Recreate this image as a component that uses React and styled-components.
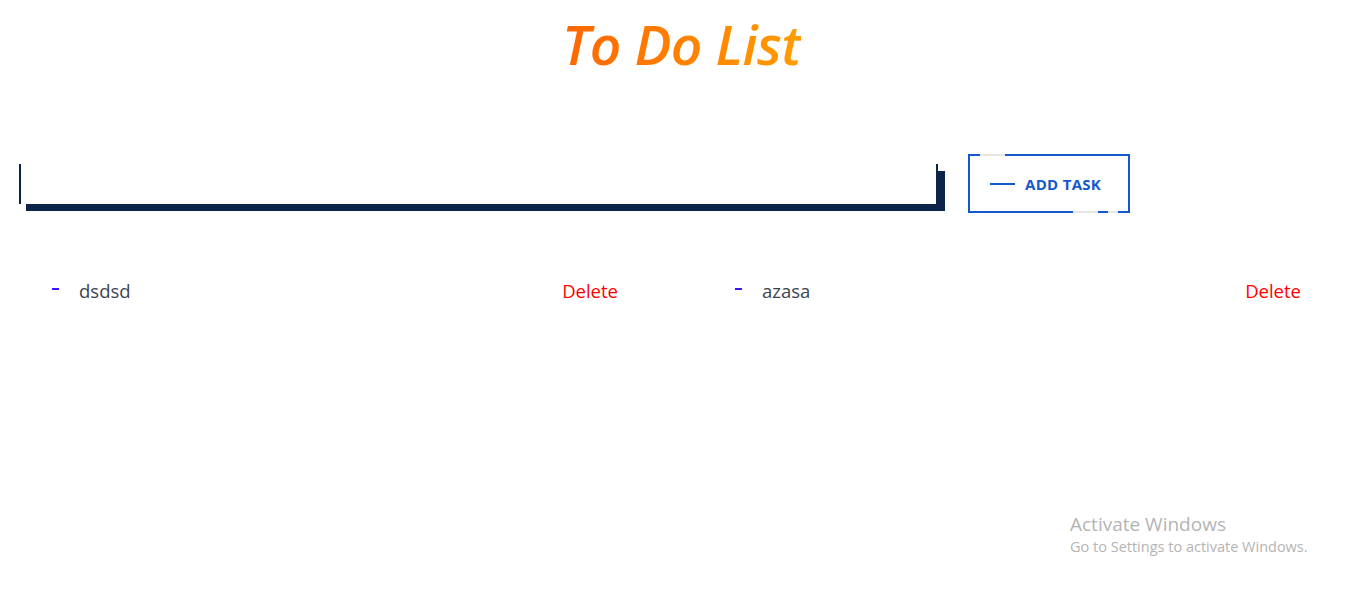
import React from "react";
import styled, { createGlobalStyle } from "styled-components";

const Global = createGlobalStyle`
  html, body { margin: 0; padding: 0; background: #ffffff; }
  body { font-family: "Open Sans", "Noto Sans", sans-serif; }
`;

const Page = styled.div`
  width: 1363px;
  height: 591px;
  display: flex;
  flex-direction: column;
  position: relative;
  overflow: hidden;
`;

const Title = styled.h1`
  margin: 10px 0 0;
  text-align: center;
  font-family: "Open Sans", sans-serif;
  font-style: italic;
  font-weight: 600;
  font-size: 55px;
  line-height: 68px;
  letter-spacing: -0.6px;
`;

const Gradient = styled.span`
  background: linear-gradient(90deg, #ff6600 0%, #ff9c00 100%);
  -webkit-background-clip: text;
  background-clip: text;
  color: transparent;
`;

const Form = styled.form`
  display: flex;
  align-items: center;
  gap: 30px;
  margin-top: 76px;
  padding-left: 19px;
`;

const Input = styled.input`
  box-sizing: border-box;
  width: 919px;
  height: 40px;
  border: none;
  border-left: 2px solid #0b2447;
  border-right: 2px solid #0b2447;
  box-shadow: 7px 7px 0 #0b2447;
  outline: none;
  background: #fff;
  font-family: "Open Sans", sans-serif;
  font-size: 16px;
  padding: 0 12px;
`;

const Button = styled.button`
  position: relative;
  box-sizing: border-box;
  width: 162px;
  height: 59px;
  border: 2px solid #1459cc;
  background: #fff;
  display: flex;
  align-items: center;
  padding: 0 0 0 20px;
  gap: 10px;
  cursor: pointer;
  font-family: "Open Sans", sans-serif;
  font-weight: 700;
  font-size: 15px;
  color: #1459cc;
  letter-spacing: 0.3px;
`;

const Line = styled.span`
  width: 25px;
  height: 2px;
  background: #1459cc;
`;

const Gap = styled.span`
  position: absolute;
  height: 2px;
  background: #e6e6e6;
  left: ${(p) => p.$left}px;
  width: ${(p) => p.$width}px;
  ${(p) => (p.$top ? "top: -2px;" : "bottom: -2px;")}
`;

const List = styled.ul`
  list-style: none;
  margin: 64px 0 0;
  padding: 0 0 0 40px;
  display: grid;
  grid-template-columns: repeat(2, 590px);
  column-gap: 93px;
`;

const Item = styled.li`
  display: flex;
  align-items: center;
  padding: 0 12px;
  height: 26px;
  font-size: 18.5px;
`;

const Dash = styled.span`
  width: 7px;
  height: 2px;
  background: #3a16ff;
  margin-right: 20px;
  margin-top: -2px;
`;

const Text = styled.span`
  color: #3c4450;
  flex: 1;
`;

const Delete = styled.span`
  color: #ff0000;
  cursor: pointer;
`;

const Watermark = styled.div`
  position: absolute;
  left: 1070px;
  top: 512px;
  color: #b4b4b4;
  font-family: "Open Sans", sans-serif;
`;

const WTitle = styled.div`
  font-size: 19px;
  line-height: 25px;
`;

const WSub = styled.div`
  font-size: 14.5px;
  line-height: 20px;
`;

export default function App() {
  const tasks = ["dsdsd", "azasa"];
  return (
    <Page>
      <Global />
      <Title>
        <Gradient>To Do List</Gradient>
      </Title>
      <Form onSubmit={(e) => e.preventDefault()}>
        <Input type="text" />
        <Button type="submit">
          <Gap $top $left={10} $width={25} />
          <Gap $left={103} $width={25} />
          <Gap $left={138} $width={10} />
          <Line />
          ADD TASK
        </Button>
      </Form>
      <List>
        {tasks.map((t) => (
          <Item key={t}>
            <Dash />
            <Text>{t}</Text>
            <Delete>Delete</Delete>
          </Item>
        ))}
      </List>
      <Watermark>
        <WTitle>Activate Windows</WTitle>
        <WSub>Go to Settings to activate Windows.</WSub>
      </Watermark>
    </Page>
  );
}
